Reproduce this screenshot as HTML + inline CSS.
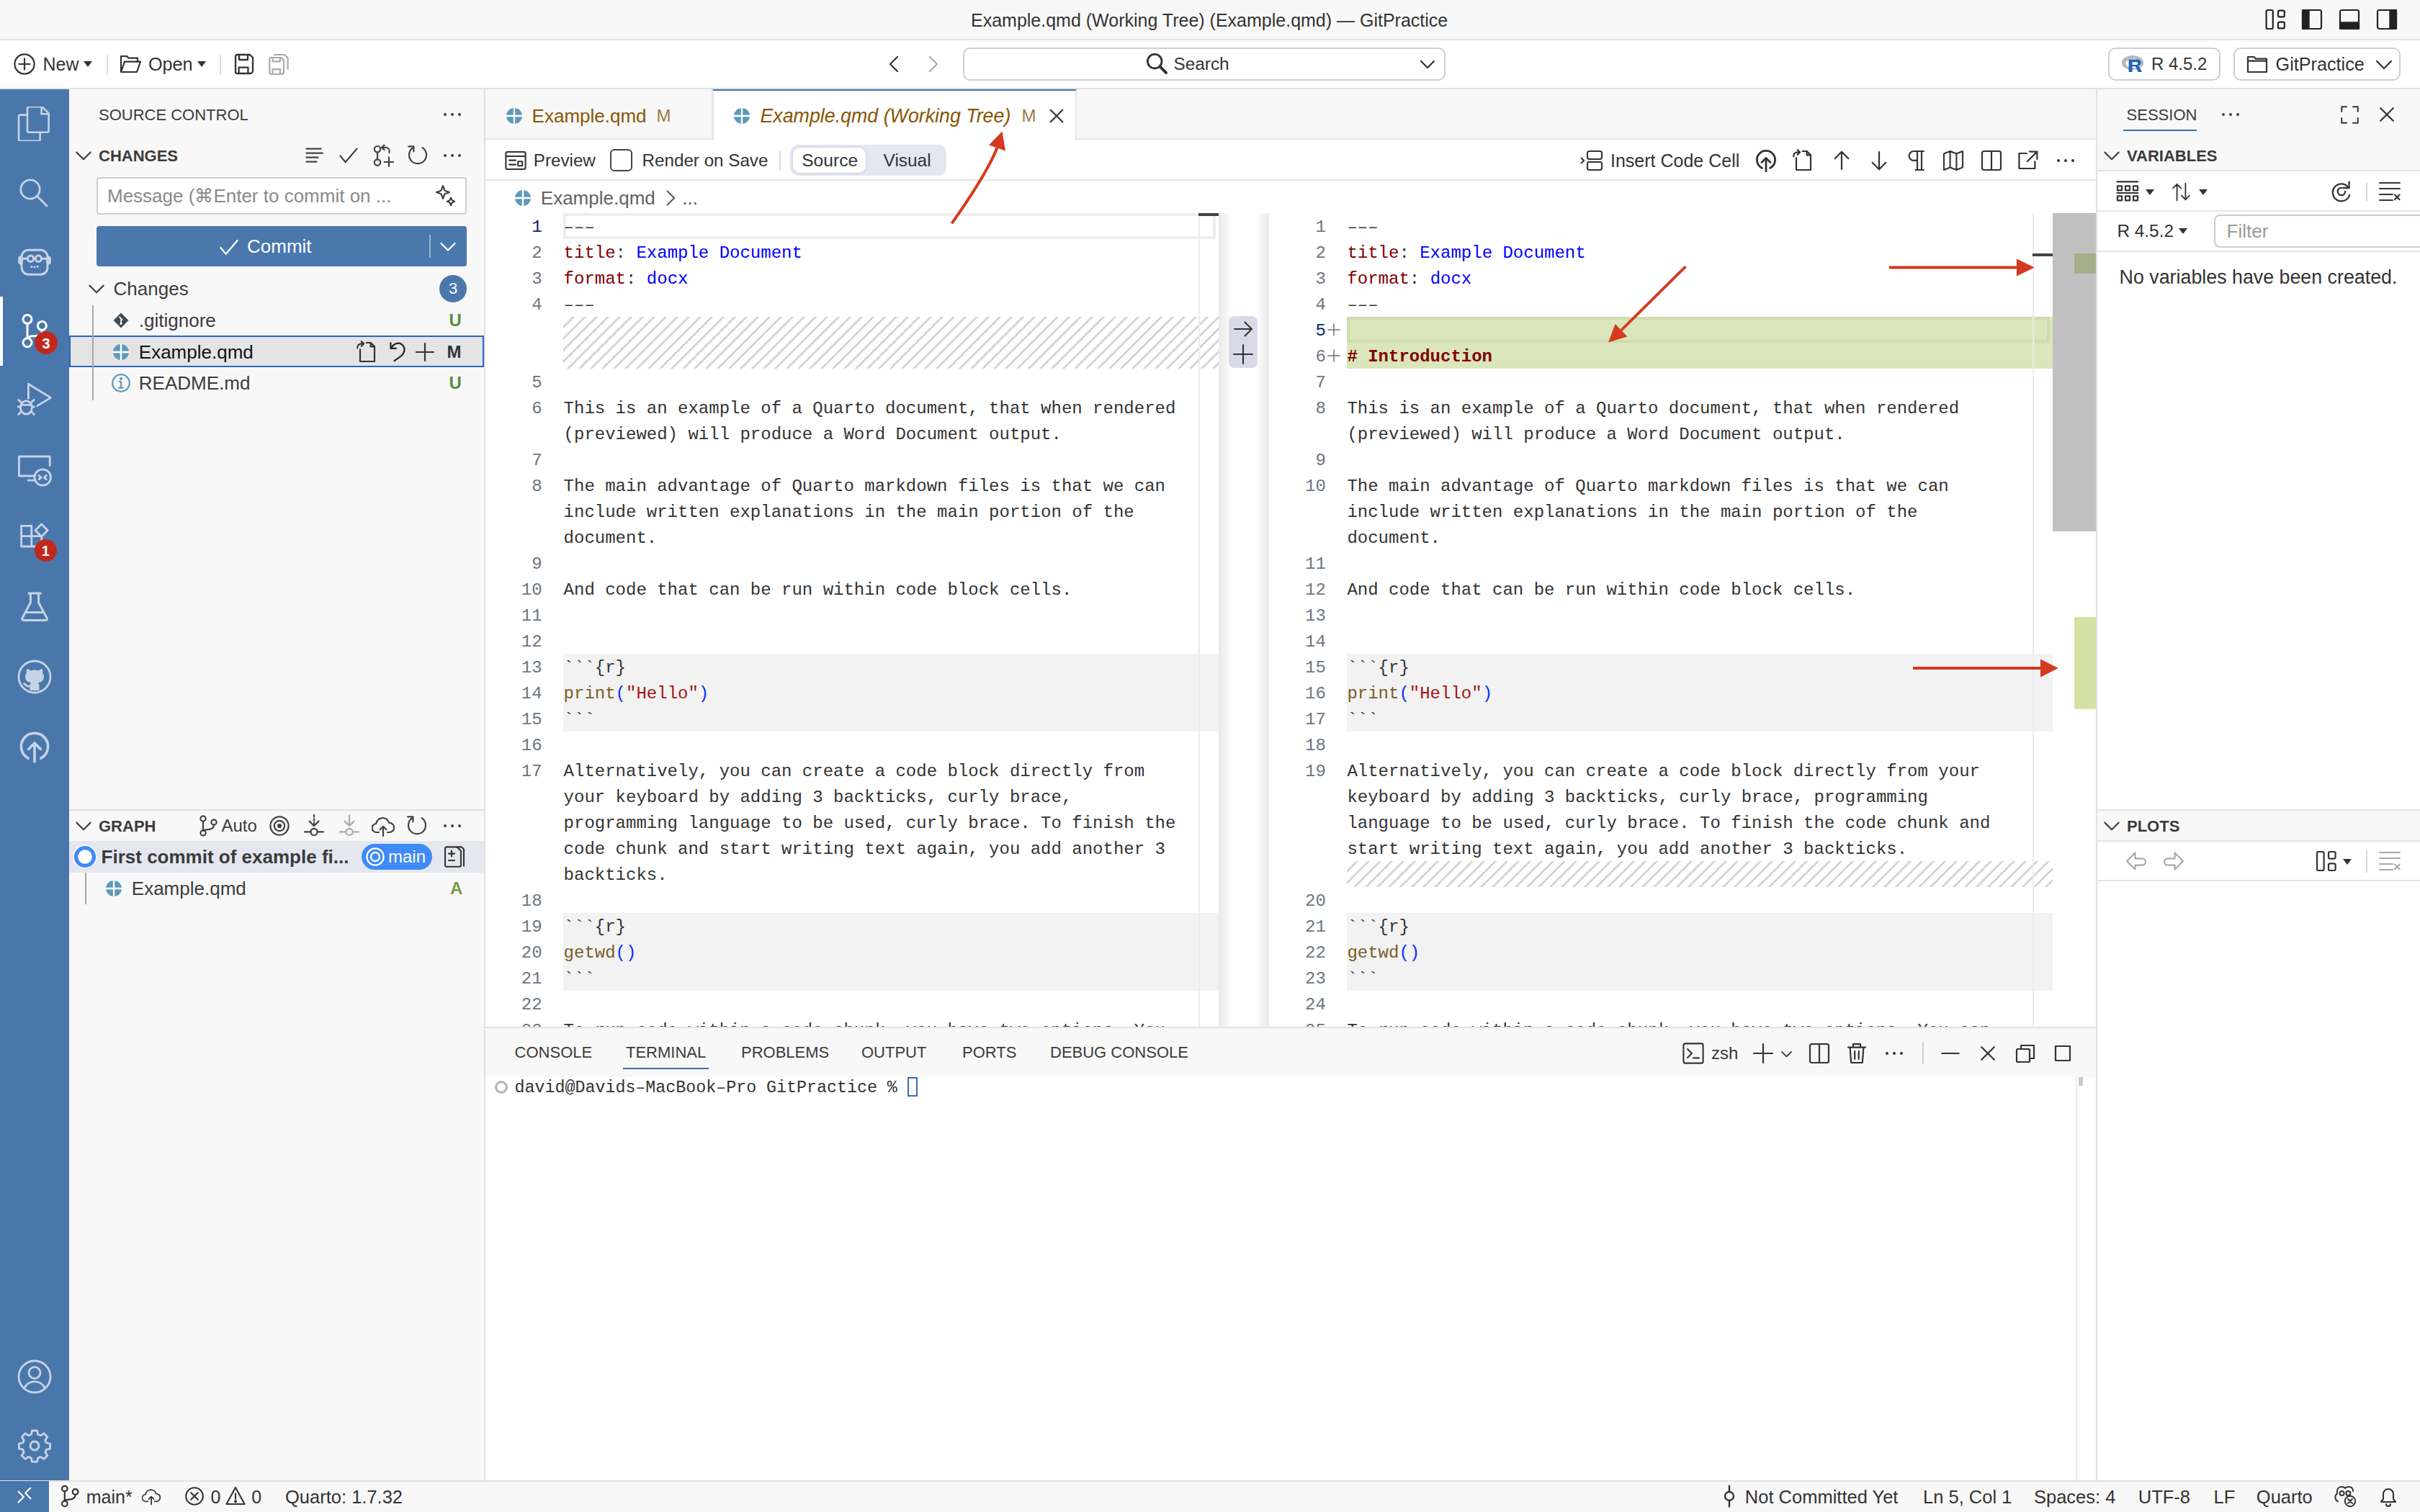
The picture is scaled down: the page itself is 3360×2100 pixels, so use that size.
<!DOCTYPE html><html><head><meta charset="utf-8"><style>
html{zoom:2}
@media (max-width:2000px){html{zoom:1}}
*{box-sizing:border-box}
body{margin:0;width:1680px;height:1050px;overflow:hidden;position:relative;background:#fff;font-family:"Liberation Sans",sans-serif;color:#3b3b3b;-webkit-font-smoothing:antialiased}
.a{position:absolute}
.t{position:absolute;white-space:pre;line-height:0;}
.m{font-family:"Liberation Mono",monospace}
</style></head><body><div class="a " style="left:0px;top:0px;width:1680px;height:28px;background:#f8f8f8;border-bottom:1px solid #e2e2e2"></div>
<div class="t " style="left:674px;top:14px;font-size:12.5px;color:#333">Example.qmd (Working Tree) (Example.qmd) — GitPractice</div>
<div class="a " style="left:0px;top:28px;width:1680px;height:34px;background:#ffffff;border-bottom:1px solid #e2e2e2"></div>
<div class="t " style="left:29.75px;top:44.5px;font-size:12.5px;color:#333">New</div>
<div class="t " style="left:103px;top:44.5px;font-size:12.6px;color:#333">Open</div>
<div class="a " style="left:74px;top:38px;width:1px;height:14px;background:#dcdcdc"></div>
<div class="a " style="left:152.5px;top:38px;width:1px;height:14px;background:#dcdcdc"></div>
<div class="a " style="left:668.5px;top:33px;width:335px;height:23px;border:1px solid #cfcfcf;border-radius:5px;background:#fff"></div>
<div class="t " style="left:814.7px;top:44.5px;font-size:12.2px;color:#333">Search</div>
<div class="a " style="left:1463.5px;top:33px;width:78px;height:23px;border:1px solid #cfcfcf;border-radius:5px;background:#fff"></div>
<div class="t " style="left:1493.5px;top:44.5px;font-size:12px;color:#333">R 4.5.2</div>
<div class="a " style="left:1550.5px;top:33px;width:116px;height:23px;border:1px solid #cfcfcf;border-radius:5px;background:#fff"></div>
<div class="t " style="left:1579.8px;top:44.5px;font-size:12.6px;color:#333">GitPractice</div>
<div class="a " style="left:0px;top:62px;width:48px;height:966px;background:#4a77ab"></div>
<div class="a " style="left:0px;top:206px;width:2px;height:48px;background:#ffffff"></div>
<div class="a " style="left:48px;top:62px;width:289px;height:966px;background:#f8f8f8;border-right:1px solid #e2e2e2"></div>
<div class="t " style="left:68.5px;top:80px;font-size:11px;color:#3b3b3b">SOURCE CONTROL</div>
<div class="t " style="left:68.5px;top:108.7px;font-size:11px;font-weight:bold;color:#3b3b3b">CHANGES</div>
<div class="a " style="left:67px;top:123px;width:257px;height:26px;border:1px solid #cecece;border-radius:2px;background:#fff"></div>
<div class="t " style="left:74.5px;top:136px;font-size:13px;color:#8a8a8a">Message (⌘Enter to commit on ...</div>
<div class="a " style="left:67px;top:157px;width:257px;height:28px;background:#4a78ad;border-radius:2px"></div>
<div class="a " style="left:298px;top:163px;width:1px;height:16px;background:rgba(255,255,255,0.45)"></div>
<div class="t " style="left:171.5px;top:171px;font-size:13px;color:#fff">Commit</div>
<div class="t " style="left:78.8px;top:200.5px;font-size:13px;color:#3b3b3b">Changes</div>
<div class="a " style="left:305px;top:191px;width:19px;height:19px;background:#4a78ad;border-radius:50%"></div>
<div class="t " style="left:314.5px;top:200.5px;font-size:11px;color:#fff;transform:translateX(-50%)">3</div>
<div class="a " style="left:48px;top:233px;width:288px;height:22px;background:#e4e4e4;border:1px solid #2a64c8"></div>
<div class="a " style="left:64px;top:212px;width:1px;height:66px;background:#a8a8a8"></div>
<div class="t " style="left:96.4px;top:222.5px;font-size:13px;color:#3b3b3b">.gitignore</div>
<div class="t " style="left:96.4px;top:244.5px;font-size:13px;color:#111">Example.qmd</div>
<div class="t " style="left:96.4px;top:266px;font-size:13px;color:#3b3b3b">README.md</div>
<div class="t " style="left:311.8px;top:222.5px;font-size:12px;font-weight:bold;color:#588c3c">U</div>
<div class="t " style="left:311.8px;top:266px;font-size:12px;font-weight:bold;color:#588c3c">U</div>
<div class="t " style="left:310.2px;top:244.5px;font-size:12px;font-weight:bold;color:#333">M</div>
<div class="a " style="left:48px;top:562px;width:288px;height:1px;background:#e2e2e2"></div>
<div class="t " style="left:68.5px;top:574px;font-size:11px;font-weight:bold;color:#3b3b3b">GRAPH</div>
<div class="t " style="left:153.75px;top:573.5px;font-size:12px;color:#3b3b3b">Auto</div>
<div class="a " style="left:48px;top:584px;width:288px;height:22px;background:#e5e7f0"></div>
<div class="t " style="left:70.3px;top:595px;font-size:13px;font-weight:bold;color:#3b3b3b">First commit of example fi...</div>
<div class="a " style="left:251px;top:586px;width:49px;height:18px;background:#3f8af7;border-radius:9px"></div>
<div class="t " style="left:269.5px;top:595px;font-size:12px;color:#fff">main</div>
<div class="a " style="left:59px;top:606px;width:1px;height:22px;background:#a8a8a8"></div>
<div class="t " style="left:91.4px;top:617px;font-size:13px;color:#3b3b3b">Example.qmd</div>
<div class="t " style="left:312.5px;top:617px;font-size:12px;font-weight:bold;color:#7a9a4a">A</div>
<div class="a " style="left:0px;top:1028px;width:1680px;height:22px;background:#f8f8f8;border-top:1px solid #e2e2e2"></div>
<div class="a " style="left:0px;top:1028.5px;width:34px;height:21.5px;background:#4a77ab"></div>
<div class="t " style="left:59.9px;top:1039.5px;font-size:12.5px;color:#333">main*</div>
<div class="t " style="left:146.3px;top:1039.5px;font-size:12.5px;color:#333">0</div>
<div class="t " style="left:174.6px;top:1039.5px;font-size:12.5px;color:#333">0</div>
<div class="t " style="left:198px;top:1039.5px;font-size:12.75px;color:#333">Quarto: 1.7.32</div>
<div class="t " style="left:1211.4px;top:1039.5px;font-size:12.75px;color:#333">Not Committed Yet</div>
<div class="t " style="left:1335px;top:1039.5px;font-size:12.75px;color:#333">Ln 5, Col 1</div>
<div class="t " style="left:1412px;top:1039.5px;font-size:12.75px;color:#333">Spaces: 4</div>
<div class="t " style="left:1484.4px;top:1039.5px;font-size:12.75px;color:#333">UTF-8</div>
<div class="t " style="left:1536.8px;top:1039.5px;font-size:12.75px;color:#333">LF</div>
<div class="t " style="left:1566.4px;top:1039.5px;font-size:12.75px;color:#333">Quarto</div>
<div class="a " style="left:337px;top:62px;width:1118px;height:35px;background:#f8f8f8;border-bottom:1px solid #e6e6e6"></div>
<div class="a " style="left:337px;top:62px;width:158px;height:35px;background:#f8f8f8;border-right:1px solid #e6e6e6;border-bottom:1px solid #e6e6e6"></div>
<div class="t " style="left:369.3px;top:80.5px;font-size:13px;color:#895503">Example.qmd</div>
<div class="t " style="left:455.7px;top:80.5px;font-size:12px;color:#a07a40">M</div>
<div class="a " style="left:494.7px;top:62px;width:253px;height:36px;background:#fff;border-top:1px solid #3a6fb0;border-right:1px solid #e6e6e6;border-left:1px solid #e6e6e6"></div>
<div class="t " style="left:527.7px;top:80.5px;font-size:13.4px;font-style:italic;color:#895503">Example.qmd (Working Tree)</div>
<div class="t " style="left:709.3px;top:80.5px;font-size:12px;color:#a07a40">M</div>
<div class="a " style="left:337px;top:97.5px;width:1118px;height:28px;background:#fff;border-bottom:1px solid #e6e6e6"></div>
<div class="t " style="left:370.4px;top:111.5px;font-size:12.1px;color:#333">Preview</div>
<div class="a " style="left:423.7px;top:103.6px;width:15.5px;height:15.5px;border:1px solid #444;border-radius:3px;background:#fff"></div>
<div class="t " style="left:445.8px;top:111.5px;font-size:12.1px;color:#333">Render on Save</div>
<div class="a " style="left:541px;top:104.5px;width:1px;height:14px;background:#dedede"></div>
<div class="a " style="left:548.6px;top:100.7px;width:108.3px;height:21.5px;background:#e4e6f0;border-radius:6px"></div>
<div class="a " style="left:549.7px;top:101.6px;width:52.3px;height:19.6px;background:#fff;border:1px solid #d9dcec;border-radius:6px"></div>
<div class="t " style="left:556.6px;top:111.5px;font-size:12.3px;color:#333">Source</div>
<div class="t " style="left:613.3px;top:111.5px;font-size:12.2px;color:#333">Visual</div>
<div class="t " style="left:1118px;top:111.5px;font-size:12.5px;color:#333">Insert Code Cell</div>
<div class="t " style="left:375.4px;top:137.5px;font-size:13px;color:#616161">Example.qmd</div>
<div class="t " style="left:412.7px;top:137.5px;"></div>
<div class="a " style="left:337px;top:713px;width:1118px;height:315px;background:#fff;border-top:1px solid #e2e2e2"></div>
<div class="a " style="left:337px;top:714px;width:1118px;height:34px;background:#f8f8f8"></div>
<div class="t " style="left:357.3px;top:731px;font-size:11px;color:#3b3b3b">CONSOLE</div>
<div class="t " style="left:434.5px;top:731px;font-size:11px;color:#3b3b3b">TERMINAL</div>
<div class="t " style="left:514.5px;top:731px;font-size:11px;color:#3b3b3b">PROBLEMS</div>
<div class="t " style="left:598px;top:731px;font-size:11px;color:#3b3b3b">OUTPUT</div>
<div class="t " style="left:668px;top:731px;font-size:11px;color:#3b3b3b">PORTS</div>
<div class="t " style="left:729px;top:731px;font-size:11px;color:#3b3b3b">DEBUG CONSOLE</div>
<div class="a " style="left:432.5px;top:741.3px;width:59.5px;height:1px;background:#3a6fb0"></div>
<div class="t " style="left:1188px;top:731.5px;font-size:12px;color:#3b3b3b">zsh</div>
<div class="t m" style="left:357.3px;top:755.6px;font-size:11.65px;color:#333">david@Davids–MacBook–Pro GitPractice % </div>
<div class="a " style="left:630px;top:748.2px;width:7px;height:13.5px;border:1px solid #3a6bb0"></div>
<div class="a " style="left:1441px;top:748px;width:1px;height:280px;background:#ececec"></div>
<div class="a " style="left:1443px;top:748px;width:3px;height:6px;background:#c8c8c8"></div>
<div class="a " style="left:1455px;top:62px;width:225px;height:966px;background:#fff;border-left:1px solid #e2e2e2"></div>
<div class="a " style="left:1456px;top:62px;width:224px;height:57px;background:#f8f8f8;border-bottom:1px solid #e2e2e2"></div>
<div class="t " style="left:1476.3px;top:80px;font-size:11px;color:#3b3b3b">SESSION</div>
<div class="a " style="left:1474px;top:90px;width:51px;height:1.2px;background:#3a6fb0"></div>
<div class="t " style="left:1476.5px;top:108.7px;font-size:11px;font-weight:bold;color:#3b3b3b">VARIABLES</div>
<div class="a " style="left:1456px;top:146px;width:224px;height:1px;background:#e6e6e6"></div>
<div class="t " style="left:1469.7px;top:160.7px;font-size:12.2px;color:#333">R 4.5.2</div>
<div class="a " style="left:1536.8px;top:149px;width:160px;height:23px;border:1px solid #c9ccd3;border-radius:4px;background:#fff"></div>
<div class="t " style="left:1545.8px;top:160.7px;font-size:13px;color:#9a9a9a">Filter</div>
<div class="a " style="left:1456px;top:174px;width:224px;height:1px;background:#e6e6e6"></div>
<div class="t " style="left:1471.3px;top:192.5px;font-size:13.4px;color:#333">No variables have been created.</div>
<div class="a " style="left:1456px;top:562px;width:224px;height:22.5px;background:#f8f8f8;border-top:1px solid #e2e2e2;border-bottom:1px solid #e2e2e2"></div>
<div class="t " style="left:1476.5px;top:574px;font-size:11px;font-weight:bold;color:#3b3b3b">PLOTS</div>
<div class="a " style="left:1456px;top:611px;width:224px;height:1px;background:#e6e6e6"></div>
<div class="a" style="left:337px;top:148px;width:1118px;height:565px;overflow:hidden">
<div class="a" style="left:-337px;top:-148px;width:1680px;height:1050px">
<div class="a " style="left:391px;top:454px;width:455px;height:54px;background:#f2f2f2"></div>
<div class="a " style="left:391px;top:634px;width:455px;height:54px;background:#f2f2f2"></div>
<div class="a " style="left:391px;top:220px;width:455px;height:36px;background-image:linear-gradient(-45deg,#d4d4d4 12.5%,transparent 12.5%,transparent 50%,#d4d4d4 50%,#d4d4d4 62.5%,transparent 62.5%,transparent 100%);background-size:8px 8px"></div>
<div class="a " style="left:391px;top:148px;width:453px;height:18px;border:2px solid #eeeeee"></div>
<div class="a " style="left:935.2px;top:454px;width:489.79999999999995px;height:54px;background:#f2f2f2"></div>
<div class="a " style="left:935.2px;top:634px;width:489.79999999999995px;height:54px;background:#f2f2f2"></div>
<div class="a " style="left:935.2px;top:598px;width:489.79999999999995px;height:18px;background-image:linear-gradient(-45deg,#d4d4d4 12.5%,transparent 12.5%,transparent 50%,#d4d4d4 50%,#d4d4d4 62.5%,transparent 62.5%,transparent 100%);background-size:8px 8px"></div>
<div class="a " style="left:935.2px;top:220px;width:489.79999999999995px;height:36px;background:#dbe6bc"></div>
<div class="a " style="left:935.2px;top:220px;width:487.79999999999995px;height:18px;border:2px solid #cfdbb0"></div>
<div class="t m" style="left:336.3px;width:40px;text-align:right;top:157.9px;font-size:12px;color:#0b216f">1</div>
<div class="t m" style="left:391.3px;top:157.9px;font-size:12px"><span style="color:#333333;">–––</span></div>
<div class="t m" style="left:336.3px;width:40px;text-align:right;top:175.9px;font-size:12px;color:#6e7681">2</div>
<div class="t m" style="left:391.3px;top:175.9px;font-size:12px"><span style="color:#800000;">title</span><span style="color:#333333;">:</span><span style="color:#333333;"> </span><span style="color:#0000ff;">Example Document</span></div>
<div class="t m" style="left:336.3px;width:40px;text-align:right;top:193.9px;font-size:12px;color:#6e7681">3</div>
<div class="t m" style="left:391.3px;top:193.9px;font-size:12px"><span style="color:#800000;">format</span><span style="color:#333333;">:</span><span style="color:#333333;"> </span><span style="color:#0000ff;">docx</span></div>
<div class="t m" style="left:336.3px;width:40px;text-align:right;top:211.9px;font-size:12px;color:#6e7681">4</div>
<div class="t m" style="left:391.3px;top:211.9px;font-size:12px"><span style="color:#333333;">–––</span></div>
<div class="t m" style="left:336.3px;width:40px;text-align:right;top:265.9px;font-size:12px;color:#6e7681">5</div>
<div class="t m" style="left:336.3px;width:40px;text-align:right;top:283.9px;font-size:12px;color:#6e7681">6</div>
<div class="t m" style="left:391.3px;top:283.9px;font-size:12px"><span style="color:#333333;">This is an example of a Quarto document, that when rendered</span></div>
<div class="t m" style="left:391.3px;top:301.9px;font-size:12px"><span style="color:#333333;">(previewed) will produce a Word Document output.</span></div>
<div class="t m" style="left:336.3px;width:40px;text-align:right;top:319.9px;font-size:12px;color:#6e7681">7</div>
<div class="t m" style="left:336.3px;width:40px;text-align:right;top:337.9px;font-size:12px;color:#6e7681">8</div>
<div class="t m" style="left:391.3px;top:337.9px;font-size:12px"><span style="color:#333333;">The main advantage of Quarto markdown files is that we can</span></div>
<div class="t m" style="left:391.3px;top:355.9px;font-size:12px"><span style="color:#333333;">include written explanations in the main portion of the</span></div>
<div class="t m" style="left:391.3px;top:373.9px;font-size:12px"><span style="color:#333333;">document.</span></div>
<div class="t m" style="left:336.3px;width:40px;text-align:right;top:391.9px;font-size:12px;color:#6e7681">9</div>
<div class="t m" style="left:336.3px;width:40px;text-align:right;top:409.9px;font-size:12px;color:#6e7681">10</div>
<div class="t m" style="left:391.3px;top:409.9px;font-size:12px"><span style="color:#333333;">And code that can be run within code block cells.</span></div>
<div class="t m" style="left:336.3px;width:40px;text-align:right;top:427.9px;font-size:12px;color:#6e7681">11</div>
<div class="t m" style="left:336.3px;width:40px;text-align:right;top:445.9px;font-size:12px;color:#6e7681">12</div>
<div class="t m" style="left:336.3px;width:40px;text-align:right;top:463.9px;font-size:12px;color:#6e7681">13</div>
<div class="t m" style="left:391.3px;top:463.9px;font-size:12px"><span style="color:#333333;">```{r}</span></div>
<div class="t m" style="left:336.3px;width:40px;text-align:right;top:481.9px;font-size:12px;color:#6e7681">14</div>
<div class="t m" style="left:391.3px;top:481.9px;font-size:12px"><span style="color:#795e26;">print</span><span style="color:#0431fa;">(</span><span style="color:#a31515;">&quot;Hello&quot;</span><span style="color:#0431fa;">)</span></div>
<div class="t m" style="left:336.3px;width:40px;text-align:right;top:499.9px;font-size:12px;color:#6e7681">15</div>
<div class="t m" style="left:391.3px;top:499.9px;font-size:12px"><span style="color:#333333;">```</span></div>
<div class="t m" style="left:336.3px;width:40px;text-align:right;top:517.9px;font-size:12px;color:#6e7681">16</div>
<div class="t m" style="left:336.3px;width:40px;text-align:right;top:535.9px;font-size:12px;color:#6e7681">17</div>
<div class="t m" style="left:391.3px;top:535.9px;font-size:12px"><span style="color:#333333;">Alternatively, you can create a code block directly from</span></div>
<div class="t m" style="left:391.3px;top:553.9px;font-size:12px"><span style="color:#333333;">your keyboard by adding 3 backticks, curly brace,</span></div>
<div class="t m" style="left:391.3px;top:571.9px;font-size:12px"><span style="color:#333333;">programming language to be used, curly brace. To finish the</span></div>
<div class="t m" style="left:391.3px;top:589.9px;font-size:12px"><span style="color:#333333;">code chunk and start writing text again, you add another 3</span></div>
<div class="t m" style="left:391.3px;top:607.9px;font-size:12px"><span style="color:#333333;">backticks.</span></div>
<div class="t m" style="left:336.3px;width:40px;text-align:right;top:625.9px;font-size:12px;color:#6e7681">18</div>
<div class="t m" style="left:336.3px;width:40px;text-align:right;top:643.9px;font-size:12px;color:#6e7681">19</div>
<div class="t m" style="left:391.3px;top:643.9px;font-size:12px"><span style="color:#333333;">```{r}</span></div>
<div class="t m" style="left:336.3px;width:40px;text-align:right;top:661.9px;font-size:12px;color:#6e7681">20</div>
<div class="t m" style="left:391.3px;top:661.9px;font-size:12px"><span style="color:#795e26;">getwd</span><span style="color:#0431fa;">()</span></div>
<div class="t m" style="left:336.3px;width:40px;text-align:right;top:679.9px;font-size:12px;color:#6e7681">21</div>
<div class="t m" style="left:391.3px;top:679.9px;font-size:12px"><span style="color:#333333;">```</span></div>
<div class="t m" style="left:336.3px;width:40px;text-align:right;top:697.9px;font-size:12px;color:#6e7681">22</div>
<div class="t m" style="left:336.3px;width:40px;text-align:right;top:715.9px;font-size:12px;color:#6e7681">23</div>
<div class="t m" style="left:391.3px;top:715.9px;font-size:12px"><span style="color:#333333;">To run code within a code chunk, you have two options. You</span></div>
<div class="t m" style="left:880.4px;width:40px;text-align:right;top:157.9px;font-size:12px;color:#6e7681">1</div>
<div class="t m" style="left:935.2px;top:157.9px;font-size:12px"><span style="color:#333333;">–––</span></div>
<div class="t m" style="left:880.4px;width:40px;text-align:right;top:175.9px;font-size:12px;color:#6e7681">2</div>
<div class="t m" style="left:935.2px;top:175.9px;font-size:12px"><span style="color:#800000;">title</span><span style="color:#333333;">:</span><span style="color:#333333;"> </span><span style="color:#0000ff;">Example Document</span></div>
<div class="t m" style="left:880.4px;width:40px;text-align:right;top:193.9px;font-size:12px;color:#6e7681">3</div>
<div class="t m" style="left:935.2px;top:193.9px;font-size:12px"><span style="color:#800000;">format</span><span style="color:#333333;">:</span><span style="color:#333333;"> </span><span style="color:#0000ff;">docx</span></div>
<div class="t m" style="left:880.4px;width:40px;text-align:right;top:211.9px;font-size:12px;color:#6e7681">4</div>
<div class="t m" style="left:935.2px;top:211.9px;font-size:12px"><span style="color:#333333;">–––</span></div>
<div class="t m" style="left:880.4px;width:40px;text-align:right;top:229.9px;font-size:12px;color:#0b216f">5</div>
<div class="t m" style="left:880.4px;width:40px;text-align:right;top:247.9px;font-size:12px;color:#6e7681">6</div>
<div class="t m" style="left:935.2px;top:247.9px;font-size:12px"><span style="color:#800000;font-weight:bold;"># Introduction</span></div>
<div class="t m" style="left:880.4px;width:40px;text-align:right;top:265.9px;font-size:12px;color:#6e7681">7</div>
<div class="t m" style="left:880.4px;width:40px;text-align:right;top:283.9px;font-size:12px;color:#6e7681">8</div>
<div class="t m" style="left:935.2px;top:283.9px;font-size:12px"><span style="color:#333333;">This is an example of a Quarto document, that when rendered</span></div>
<div class="t m" style="left:935.2px;top:301.9px;font-size:12px"><span style="color:#333333;">(previewed) will produce a Word Document output.</span></div>
<div class="t m" style="left:880.4px;width:40px;text-align:right;top:319.9px;font-size:12px;color:#6e7681">9</div>
<div class="t m" style="left:880.4px;width:40px;text-align:right;top:337.9px;font-size:12px;color:#6e7681">10</div>
<div class="t m" style="left:935.2px;top:337.9px;font-size:12px"><span style="color:#333333;">The main advantage of Quarto markdown files is that we can</span></div>
<div class="t m" style="left:935.2px;top:355.9px;font-size:12px"><span style="color:#333333;">include written explanations in the main portion of the</span></div>
<div class="t m" style="left:935.2px;top:373.9px;font-size:12px"><span style="color:#333333;">document.</span></div>
<div class="t m" style="left:880.4px;width:40px;text-align:right;top:391.9px;font-size:12px;color:#6e7681">11</div>
<div class="t m" style="left:880.4px;width:40px;text-align:right;top:409.9px;font-size:12px;color:#6e7681">12</div>
<div class="t m" style="left:935.2px;top:409.9px;font-size:12px"><span style="color:#333333;">And code that can be run within code block cells.</span></div>
<div class="t m" style="left:880.4px;width:40px;text-align:right;top:427.9px;font-size:12px;color:#6e7681">13</div>
<div class="t m" style="left:880.4px;width:40px;text-align:right;top:445.9px;font-size:12px;color:#6e7681">14</div>
<div class="t m" style="left:880.4px;width:40px;text-align:right;top:463.9px;font-size:12px;color:#6e7681">15</div>
<div class="t m" style="left:935.2px;top:463.9px;font-size:12px"><span style="color:#333333;">```{r}</span></div>
<div class="t m" style="left:880.4px;width:40px;text-align:right;top:481.9px;font-size:12px;color:#6e7681">16</div>
<div class="t m" style="left:935.2px;top:481.9px;font-size:12px"><span style="color:#795e26;">print</span><span style="color:#0431fa;">(</span><span style="color:#a31515;">&quot;Hello&quot;</span><span style="color:#0431fa;">)</span></div>
<div class="t m" style="left:880.4px;width:40px;text-align:right;top:499.9px;font-size:12px;color:#6e7681">17</div>
<div class="t m" style="left:935.2px;top:499.9px;font-size:12px"><span style="color:#333333;">```</span></div>
<div class="t m" style="left:880.4px;width:40px;text-align:right;top:517.9px;font-size:12px;color:#6e7681">18</div>
<div class="t m" style="left:880.4px;width:40px;text-align:right;top:535.9px;font-size:12px;color:#6e7681">19</div>
<div class="t m" style="left:935.2px;top:535.9px;font-size:12px"><span style="color:#333333;">Alternatively, you can create a code block directly from your</span></div>
<div class="t m" style="left:935.2px;top:553.9px;font-size:12px"><span style="color:#333333;">keyboard by adding 3 backticks, curly brace, programming</span></div>
<div class="t m" style="left:935.2px;top:571.9px;font-size:12px"><span style="color:#333333;">language to be used, curly brace. To finish the code chunk and</span></div>
<div class="t m" style="left:935.2px;top:589.9px;font-size:12px"><span style="color:#333333;">start writing text again, you add another 3 backticks.</span></div>
<div class="t m" style="left:880.4px;width:40px;text-align:right;top:625.9px;font-size:12px;color:#6e7681">20</div>
<div class="t m" style="left:880.4px;width:40px;text-align:right;top:643.9px;font-size:12px;color:#6e7681">21</div>
<div class="t m" style="left:935.2px;top:643.9px;font-size:12px"><span style="color:#333333;">```{r}</span></div>
<div class="t m" style="left:880.4px;width:40px;text-align:right;top:661.9px;font-size:12px;color:#6e7681">22</div>
<div class="t m" style="left:935.2px;top:661.9px;font-size:12px"><span style="color:#795e26;">getwd</span><span style="color:#0431fa;">()</span></div>
<div class="t m" style="left:880.4px;width:40px;text-align:right;top:679.9px;font-size:12px;color:#6e7681">23</div>
<div class="t m" style="left:935.2px;top:679.9px;font-size:12px"><span style="color:#333333;">```</span></div>
<div class="t m" style="left:880.4px;width:40px;text-align:right;top:697.9px;font-size:12px;color:#6e7681">24</div>
<div class="t m" style="left:880.4px;width:40px;text-align:right;top:715.9px;font-size:12px;color:#6e7681">25</div>
<div class="t m" style="left:935.2px;top:715.9px;font-size:12px"><span style="color:#333333;">To run code within a code chunk, you have two options. You can</span></div>
<svg class="a" style="left:921.5px;top:224.5px" width="9" height="9" viewBox="0 0 9 9"><path d="M4.5 0.2v8.6M0.2 4.5h8.6" stroke="#6f6f6f" stroke-width="0.75"/></svg>
<svg class="a" style="left:921.5px;top:242.5px" width="9" height="9" viewBox="0 0 9 9"><path d="M4.5 0.2v8.6M0.2 4.5h8.6" stroke="#6f6f6f" stroke-width="0.75"/></svg>
<div class="a " style="left:832px;top:148px;width:1px;height:565px;background:#ececec"></div>
<div class="a " style="left:832px;top:148px;width:14px;height:2px;background:#444"></div>
<div class="a " style="left:846px;top:148px;width:9px;height:565px;background:linear-gradient(to right,rgba(0,0,0,0.09),rgba(0,0,0,0))"></div>
<div class="a " style="left:872px;top:148px;width:9px;height:565px;background:linear-gradient(to left,rgba(0,0,0,0.09),rgba(0,0,0,0))"></div>
<div class="a " style="left:853px;top:219.6px;width:20px;height:36px;background:#d9d9e8;border-radius:4px"></div>
<div class="a " style="left:1411px;top:148px;width:1px;height:565px;background:#ececec"></div>
<div class="a " style="left:1411px;top:176px;width:14px;height:2px;background:#444"></div>
<div class="a " style="left:1425px;top:148px;width:30px;height:220.8px;background:#c1c1c1"></div>
<div class="a " style="left:1440px;top:176px;width:15px;height:14px;background:#a5b08a"></div>
<div class="a " style="left:1440px;top:428.3px;width:15px;height:64px;background:#d3e2a4"></div>
</div></div>
<svg class="a" style="left:11.5px;top:74.0px;" width="24" height="24" viewBox="0 0 24 24" fill="none" stroke="#c5d3e6" stroke-width="1.3" stroke-linecap="round" stroke-linejoin="round"><path d="M7.5 5.8h-5a1 1 0 0 0-1 1v16.1a1 1 0 0 0 1 1h12.8a1 1 0 0 0 1-1v-5"/><path d="M7.5 1.1a1 1 0 0 1 1-1h9.2l4.6 4.6v12.2a1 1 0 0 1-1 1h-12.8a1 1 0 0 1-1-1z"/><path d="M17.3 0.3v4.8h4.8" stroke-linejoin="miter"/></svg>
<svg class="a" style="left:11.5px;top:122.0px;" width="24" height="24" viewBox="0 0 24 24" fill="none" stroke="#c5d3e6" stroke-width="1.4" stroke-linecap="round" stroke-linejoin="round"><circle cx="9.5" cy="9.5" r="6.6"/><path d="M14.3 14.3l6.7 6.7"/></svg>
<svg class="a" style="left:12.0px;top:170.0px;" width="24" height="24" viewBox="0 0 24 24" fill="none" stroke="#c5d3e6" stroke-width="1.5" stroke-linecap="round" stroke-linejoin="round"><rect x="3" y="3.6" width="18" height="17" rx="4.8"/><circle cx="9.3" cy="9.6" r="2.1"/><circle cx="14.7" cy="9.6" r="2.1"/><path d="M11.4 9.6h1.2M3 9.6h4.2M21 9.6h-4.2"/><rect x="1.3" y="8.6" width="1.9" height="4.4" rx="0.95" fill="#c5d3e6"/><rect x="20.8" y="8.6" width="1.9" height="4.4" rx="0.95" fill="#c5d3e6"/><circle cx="9.9" cy="15.2" r="0.75" fill="#c5d3e6" stroke="none"/><circle cx="12" cy="15.4" r="0.75" fill="#c5d3e6" stroke="none"/><circle cx="14.1" cy="15.1" r="0.75" fill="#c5d3e6" stroke="none"/></svg>
<svg class="a" style="left:12.0px;top:218.0px;" width="24" height="24" viewBox="0 0 24 24" fill="none" stroke="#ffffff" stroke-width="1.5" stroke-linecap="round" stroke-linejoin="round"><circle cx="7" cy="3.7" r="3"/><circle cx="7" cy="19.9" r="3"/><circle cx="17.2" cy="8.2" r="3"/><path d="M7 6.7v10.2"/><path d="M17.2 11.2c0 3-2.5 4.2-5 4.2h-1.5c-2 0-3.7 1.2-3.7 1.5"/></svg>
<svg class="a" style="left:12.0px;top:266.0px;" width="24" height="24" viewBox="0 0 24 24" fill="none" stroke="#c5d3e6" stroke-width="1.4" stroke-linecap="round" stroke-linejoin="round"><path d="M7.7 0.6l15.5 9.6-9.3 5.6"/><path d="M7.7 0.6v10"/><ellipse cx="6.2" cy="17" rx="4" ry="4.6"/><path d="M2.2 16.5h-1.6M10.2 16.5h1.6M2.6 13.3l-1.8-1.6M9.8 13.3l1.8-1.6M2.6 20l-1.8 1.8M9.8 20l1.8 1.8M2.8 15.2h6.8"/></svg>
<svg class="a" style="left:12.0px;top:314.0px;" width="24" height="24" viewBox="0 0 24 24" fill="none" stroke="#c5d3e6" stroke-width="1.4" stroke-linecap="round" stroke-linejoin="round"><path d="M11.2 16.5h-10v-13.5h21.4v6.3"/><path d="M7.5 19.6h4"/><circle cx="17.6" cy="17.5" r="5.6"/><path d="M15 16.2l1.6 1.4-1.6 1.3M20.2 16.2l-1.6 1.4 1.6 1.3"/></svg>
<svg class="a" style="left:12.0px;top:362.0px;" width="24" height="24" viewBox="0 0 24 24" fill="none" stroke="#c5d3e6" stroke-width="1.4" stroke-linecap="round" stroke-linejoin="round"><path d="M2.8 3.2h7.1v14.3h-7.1z M2.8 10.3h7.1M9.9 10.3h7v7.2h-7"/><path d="M12.5 6.3l4.3-4.3 4.3 4.3-4.3 4.3z"/></svg>
<svg class="a" style="left:12.0px;top:410.0px;" width="24" height="24" viewBox="0 0 24 24" fill="none" stroke="#c5d3e6" stroke-width="1.5" stroke-linecap="round" stroke-linejoin="round"><path d="M9.2 2v6.5l-5.8 10.8a1 1 0 0 0 0.9 1.4h15.4a1 1 0 0 0 0.9-1.4l-5.8-10.8v-6.5"/><path d="M7.8 2h8.4M5.8 15.2h12.4"/></svg>
<svg class="a" style="left:12.0px;top:458.0px;" width="24" height="24" viewBox="0 0 24 24" fill="none" stroke="#c5d3e6" stroke-width="1.4" stroke-linecap="round" stroke-linejoin="round"><circle cx="12" cy="12" r="11"/><path fill="#c5d3e6" stroke="none" d="M8.8 21.5v-3.6c0-0.8 0.3-1.4 0.7-1.8-2.3-0.3-4-1.4-4-4.2 0-1 0.4-1.9 1-2.5-0.1-0.3-0.4-1.4 0.1-2.7 0 0 0.8-0.3 2.7 1a9 9 0 0 1 5.4 0c1.9-1.3 2.7-1 2.7-1 0.5 1.3 0.2 2.4 0.1 2.7 0.6 0.7 1 1.5 1 2.5 0 2.8-1.7 3.9-4 4.2 0.4 0.4 0.7 1 0.7 1.8v3.6z"/><path d="M8.8 18.6c-2.5 0.5-2.8-1.4-4-1.8"/></svg>
<svg class="a" style="left:12.0px;top:506.0px;" width="24" height="24" viewBox="0 0 24 24" fill="none" stroke="#c5d3e6" stroke-width="1.8" stroke-linecap="round" stroke-linejoin="round"><path d="M7.6 20.6a9.3 9.3 0 1 1 8.8 0"/><path d="M12 23v-12.6M7.8 14.2l4.2-4.2 4.2 4.2"/></svg>
<svg class="a" style="left:12.0px;top:944.0px;" width="24" height="24" viewBox="0 0 24 24" fill="none" stroke="#c5d3e6" stroke-width="1.4" stroke-linecap="round" stroke-linejoin="round"><circle cx="12" cy="12" r="11"/><circle cx="12" cy="9.3" r="4"/><path d="M4.8 20.2c1.2-3 4-4.8 7.2-4.8s6 1.8 7.2 4.8"/></svg>
<svg class="a" style="left:12.0px;top:992.0px;" width="24" height="24" viewBox="0 0 24 24" fill="none" stroke="#c5d3e6" stroke-width="1.4" stroke-linecap="round" stroke-linejoin="round"><path d="M10.2 1.5h3.6l0.5 2.6 1.9 0.8 2.2-1.5 2.5 2.5-1.5 2.2 0.8 1.9 2.6 0.5v3.6l-2.6 0.5-0.8 1.9 1.5 2.2-2.5 2.5-2.2-1.5-1.9 0.8-0.5 2.6h-3.6l-0.5-2.6-1.9-0.8-2.2 1.5-2.5-2.5 1.5-2.2-0.8-1.9-2.6-0.5v-3.6l2.6-0.5 0.8-1.9-1.5-2.2 2.5-2.5 2.2 1.5 1.9-0.8z"/><circle cx="12" cy="12" r="3"/></svg>
<div class="a " style="left:24px;top:230px;width:16px;height:16px;background:#c0281d;border-radius:50%"></div>
<div class="t " style="left:32px;top:238.3px;font-size:10px;font-weight:bold;color:#fff;transform:translateX(-50%)">3</div>
<div class="a " style="left:23.85px;top:374.25px;width:15.5px;height:15.5px;background:#c0281d;border-radius:50%"></div>
<div class="t " style="left:31.6px;top:382.3px;font-size:10px;font-weight:bold;color:#fff;transform:translateX(-50%)">1</div>
<svg class="a" style="left:1571.5px;top:5.5px;" width="16" height="16" viewBox="0 0 16 16" fill="none" stroke="#222" stroke-width="1.1" stroke-linecap="round" stroke-linejoin="round"><rect x="1.8" y="1.5" width="4.6" height="13" rx="1"/><rect x="10" y="1.8" width="4.4" height="4.4" rx="1"/><rect x="10" y="9.8" width="4.4" height="4.4" rx="1"/></svg>
<svg class="a" style="left:1597.0px;top:5.5px;" width="16" height="16" viewBox="0 0 16 16" fill="none" stroke="#222" stroke-width="1.1" stroke-linecap="round" stroke-linejoin="round"><rect x="1.5" y="1.5" width="13" height="13" rx="1.2"/><rect x="1.5" y="1.5" width="4.3" height="13" fill="#222"/></svg>
<svg class="a" style="left:1623.0px;top:5.5px;" width="16" height="16" viewBox="0 0 16 16" fill="none" stroke="#222" stroke-width="1.1" stroke-linecap="round" stroke-linejoin="round"><rect x="1.5" y="1.5" width="13" height="13" rx="1.2"/><rect x="1.5" y="10.2" width="13" height="4.3" fill="#222"/></svg>
<svg class="a" style="left:1649.0px;top:5.5px;" width="16" height="16" viewBox="0 0 16 16" fill="none" stroke="#222" stroke-width="1.1" stroke-linecap="round" stroke-linejoin="round"><rect x="1.5" y="1.5" width="13" height="13" rx="1.2"/><rect x="10.2" y="1.5" width="4.3" height="13" fill="#222"/></svg>
<svg class="a" style="left:9.0px;top:36.5px;" width="16" height="16" viewBox="0 0 16 16" fill="none" stroke="#333" stroke-width="1.1" stroke-linecap="round" stroke-linejoin="round"><circle cx="8" cy="8" r="6.8"/><path d="M8 4.2v7.6M4.2 8h7.6"/></svg>
<svg class="a" style="left:58.0px;top:42.7px" width="6" height="4" viewBox="0 0 6 4"><path d="M0 0h6l-3 4z" fill="#333"/></svg>
<svg class="a" style="left:137.0px;top:42.7px" width="6" height="4" viewBox="0 0 6 4"><path d="M0 0h6l-3 4z" fill="#333"/></svg>
<svg class="a" style="left:82.5px;top:36.5px;" width="16" height="16" viewBox="0 0 16 16" fill="none" stroke="#333" stroke-width="1.1" stroke-linecap="round" stroke-linejoin="round"><path d="M1.5 13.5v-11h4l1.2 1.3h6.3v2.5"/><path d="M1.5 13.5l2.5-7.2h11l-2.5 7.2z"/></svg>
<svg class="a" style="left:161.0px;top:36.5px;" width="16" height="16" viewBox="0 0 16 16" fill="none" stroke="#333" stroke-width="1.15" stroke-linecap="round" stroke-linejoin="round"><path d="M2.5 2.5a1 1 0 0 1 1-1h9l2 2v9a2 2 0 0 1-2 2h-9a1 1 0 0 1-1-1z"/><path d="M5 1.5v3.5h6v-3.5"/><path d="M4.8 14.5v-4.2h6.4v4.2"/></svg>
<svg class="a" style="left:186.0px;top:36.5px;" width="16" height="16" viewBox="0 0 16 16" fill="none" stroke="#aaa" stroke-width="1.1" stroke-linecap="round" stroke-linejoin="round"><path d="M1.2 4.5a1 1 0 0 1 1-1h7l1.8 1.8v8.2a1.5 1.5 0 0 1-1.5 1.5h-7.3a1 1 0 0 1-1-1z"/><path d="M3.4 3.5v2.7h5v-2.7M3.3 14.9v-3.3h5.2v3.3"/><path d="M4.5 1.5h7l2.3 2.3v7.5"/></svg>
<svg class="a" style="left:612.8px;top:36.5px;" width="16" height="16" viewBox="0 0 16 16" fill="none" stroke="#333" stroke-width="1.1" stroke-linecap="round" stroke-linejoin="round"><path d="M10 3l-5 5 5 5"/></svg>
<svg class="a" style="left:639.6px;top:36.5px;" width="16" height="16" viewBox="0 0 16 16" fill="none" stroke="#aaa" stroke-width="1.1" stroke-linecap="round" stroke-linejoin="round"><path d="M6 3l5 5-5 5"/></svg>
<svg class="a" style="left:795.0px;top:36.2px;" width="16" height="16" viewBox="0 0 16 16" fill="none" stroke="#333" stroke-width="1.4" stroke-linecap="round" stroke-linejoin="round"><circle cx="6.6" cy="6.6" r="4.9"/><path d="M10.2 10.2l4.3 4.3" stroke-width="2"/></svg>
<svg class="a" style="left:982.8px;top:36.5px;" width="16" height="16" viewBox="0 0 16 16" fill="none" stroke="#333" stroke-width="1.1" stroke-linecap="round" stroke-linejoin="round"><path d="M3.5 6l4.5 4.5 4.5-4.5"/></svg>
<svg class="a" style="left:1472.5px;top:36.5px" width="17" height="16" viewBox="0 0 17 16"><ellipse cx="8" cy="7" rx="7.6" ry="5" fill="#b8b8bc"/><ellipse cx="8.6" cy="7.6" rx="5.4" ry="3.3" fill="#fff"/><path d="M5.3 4.8h6c1.6 0 2.6 0.9 2.6 2.3 0 1.1-0.6 1.8-1.6 2.1l2.2 4.3h-2.6l-1.9-3.9h-2.2v3.9h-2.5z M7.8 6.6v1.9h2.9c0.7 0 1-0.4 1-0.95s-0.3-0.95-1-0.95z" fill="#2165b6"/></svg>
<svg class="a" style="left:1559.0px;top:36.5px;" width="16" height="16" viewBox="0 0 16 16" fill="none" stroke="#333" stroke-width="1.1" stroke-linecap="round" stroke-linejoin="round"><path d="M1.5 3h4.2l1.3 1.3h7.5v9.2h-13z M1.5 5.8h13"/></svg>
<svg class="a" style="left:1647.0px;top:36.5px;" width="16" height="16" viewBox="0 0 16 16" fill="none" stroke="#333" stroke-width="1.1" stroke-linecap="round" stroke-linejoin="round"><path d="M3 6l5 5 5-5"/></svg>
<svg class="a" style="left:306px;top:71.5px" width="16" height="16" viewBox="0 0 16 16" fill="#424242"><circle cx="3" cy="8" r="1"/><circle cx="8" cy="8" r="1"/><circle cx="13" cy="8" r="1"/></svg>
<svg class="a" style="left:50.0px;top:100.2px;" width="16" height="16" viewBox="0 0 16 16" fill="none" stroke="#424242" stroke-width="1.1" stroke-linecap="round" stroke-linejoin="round"><path d="M3.2 5.8l4.8 4.8 4.8-4.8"/></svg>
<svg class="a" style="left:210.0px;top:100.0px;" width="16" height="16" viewBox="0 0 16 16" fill="none" stroke="#424242" stroke-width="1.1" stroke-linecap="round" stroke-linejoin="round"><path d="M2.3 3.3h11M2.3 6.3h12M2.3 9.3h8.9M2.3 12.3h7.9" stroke-linecap="butt"/></svg>
<svg class="a" style="left:234.0px;top:100.0px;" width="16" height="16" viewBox="0 0 16 16" fill="none" stroke="#424242" stroke-width="1.1" stroke-linecap="round" stroke-linejoin="round"><path d="M2.2 8.2l3.6 4.4 8-9.4"/></svg>
<svg class="a" style="left:257.5px;top:100.0px;" width="16" height="16" viewBox="0 0 16 16" fill="none" stroke="#424242" stroke-width="1.1" stroke-linecap="round" stroke-linejoin="round"><circle cx="4.5" cy="3.6" r="2.1"/><circle cx="4.5" cy="12.8" r="2.1"/><path d="M4.5 5.7v5M12.8 6v-1.2a2.4 2.4 0 0 0-2.4-2.4h-2.6M9.3 0.8l-1.9 1.6 1.9 1.7M12.5 9.2v6.4M9.3 12.5h6.4"/></svg>
<svg class="a" style="left:282.0px;top:100.0px;" width="16" height="16" viewBox="0 0 16 16" fill="none" stroke="#424242" stroke-width="1.1" stroke-linecap="round" stroke-linejoin="round"><path d="M11.3 2.6a6 6 0 1 1-6.6 0"/><path d="M1.6 1.7h3.6v3.5"/></svg>
<svg class="a" style="left:306px;top:100px" width="16" height="16" viewBox="0 0 16 16" fill="#424242"><circle cx="3" cy="8" r="1"/><circle cx="8" cy="8" r="1"/><circle cx="13" cy="8" r="1"/></svg>
<svg class="a" style="left:301.0px;top:127.5px;" width="16" height="16" viewBox="0 0 16 16" fill="none" stroke="#333" stroke-width="1.0" stroke-linecap="round" stroke-linejoin="round"><path d="M6.5 1.5l1.2 3.3 3.3 1.2-3.3 1.2-1.2 3.3-1.2-3.3-3.3-1.2 3.3-1.2z"/><path d="M12 9.8l0.8 1.8 1.8 0.8-1.8 0.8-0.8 1.8-0.8-1.8-1.8-0.8 1.8-0.8z"/></svg>
<svg class="a" style="left:151.0px;top:163.5px;" width="16" height="16" viewBox="0 0 16 16" fill="none" stroke="#ffffff" stroke-width="1.1" stroke-linecap="round" stroke-linejoin="round"><path d="M2.2 8.5l3.6 4.4 8-9.4"/></svg>
<svg class="a" style="left:303.0px;top:163.0px;" width="16" height="16" viewBox="0 0 16 16" fill="none" stroke="#ffffff" stroke-width="1.1" stroke-linecap="round" stroke-linejoin="round"><path d="M3.2 6l4.8 4.8 4.8-4.8"/></svg>
<svg class="a" style="left:58.8px;top:192.5px;" width="16" height="16" viewBox="0 0 16 16" fill="none" stroke="#424242" stroke-width="1.1" stroke-linecap="round" stroke-linejoin="round"><path d="M3.2 5.8l4.8 4.8 4.8-4.8"/></svg>
<svg class="a" style="left:78.3px;top:217px" width="11" height="11" viewBox="0 0 12 12"><path d="M6 0.3l5.7 5.7-5.7 5.7-5.7-5.7z" fill="#3d4a55"/><path d="M4.6 3.2l2.6 2.6M6 4.6v3.6" stroke="#f8f8f8" stroke-width="1"/><circle cx="6" cy="8.4" r="0.9" fill="#f8f8f8"/></svg>
<svg class="a" style="left:78.3px;top:239.0px" width="11.0" height="11.0" viewBox="0 0 12 12"><circle cx="6" cy="6" r="6" fill="#5f9ab8"/><path d="M6 0v12M0 6h12" stroke="#fff" stroke-width="1.3"/></svg>
<svg class="a" style="left:75.8px;top:258.0px;" width="16" height="16" viewBox="0 0 16 16" fill="none" stroke="#5f9ab8" stroke-width="1.1" stroke-linecap="round" stroke-linejoin="round"><circle cx="8" cy="8" r="5.9"/><path d="M8 7v4.3M6.6 11.3h2.8M6.8 7h1.2"/><circle cx="8" cy="4.9" r="0.5" fill="#5f9ab8"/></svg>
<svg class="a" style="left:246.5px;top:236.5px;" width="16" height="16" viewBox="0 0 16 16" fill="none" stroke="#333" stroke-width="1.1" stroke-linecap="round" stroke-linejoin="round"><path d="M3.5 6.2v8.3h10v-10.3l-2.7-2.7h-3"/><path d="M10.8 1.5v2.7h2.7"/><path d="M1.6 5.2c0-1.8 1-3 3-3h1.3M4.4 0.6l1.6 1.6-1.6 1.6"/></svg>
<svg class="a" style="left:267.4px;top:236.5px;" width="16" height="16" viewBox="0 0 16 16" fill="none" stroke="#222" stroke-width="1.1" stroke-linecap="round" stroke-linejoin="round"><path d="M3.7 1.7V5.4H7.4"/><path d="M4.2 5C5.5 2.5 9 0.6 11.6 2.8C14 4.8 13.6 8.2 11.5 10.3L6.3 14.1"/></svg>
<svg class="a" style="left:286.8px;top:236.5px;" width="16" height="16" viewBox="0 0 16 16" fill="none" stroke="#333" stroke-width="1.1" stroke-linecap="round" stroke-linejoin="round"><path d="M8 2v12M2 8h12"/></svg>
<svg class="a" style="left:50.0px;top:565.5px;" width="16" height="16" viewBox="0 0 16 16" fill="none" stroke="#424242" stroke-width="1.1" stroke-linecap="round" stroke-linejoin="round"><path d="M3.2 5.8l4.8 4.8 4.8-4.8"/></svg>
<svg class="a" style="left:136.4px;top:565.5px;" width="16" height="16" viewBox="0 0 16 16" fill="none" stroke="#424242" stroke-width="1.1" stroke-linecap="round" stroke-linejoin="round"><circle cx="4.5" cy="3" r="1.8"/><circle cx="4.5" cy="13" r="1.8"/><circle cx="12" cy="5.5" r="1.8"/><path d="M4.5 4.8v6.4M12 7.3c0 2.7-2 3.2-4 3.3-2 0.1-3.3 0.6-3.5 0.6"/></svg>
<svg class="a" style="left:185.75px;top:565.5px;" width="16" height="16" viewBox="0 0 16 16" fill="none" stroke="#424242" stroke-width="1.1" stroke-linecap="round" stroke-linejoin="round"><circle cx="8" cy="8" r="6.3"/><circle cx="8" cy="8" r="3.6"/><circle cx="8" cy="8" r="1" fill="#424242"/></svg>
<svg class="a" style="left:210.0px;top:565.5px;" width="16" height="16" viewBox="0 0 16 16" fill="none" stroke="#424242" stroke-width="1.1" stroke-linecap="round" stroke-linejoin="round"><path d="M8 0.5v1.3M8 3.2v1.3M8 5.8v1.1M4.8 4.8l3.2 3.2 3.2-3.2"/><circle cx="8" cy="12.2" r="2.3"/><path d="M1.5 12.2h4.2M10.3 12.2h4.2"/></svg>
<svg class="a" style="left:234.5px;top:565.5px;" width="16" height="16" viewBox="0 0 16 16" fill="none" stroke="#ababab" stroke-width="1.1" stroke-linecap="round" stroke-linejoin="round"><path d="M8 0.5v7.5M4.8 4.8l3.2 3.2 3.2-3.2"/><circle cx="8" cy="12.2" r="2.3"/><path d="M1.5 12.2h4.2M10.3 12.2h4.2"/></svg>
<svg class="a" style="left:257.75px;top:565.5px;" width="16" height="16" viewBox="0 0 16 16" fill="none" stroke="#424242" stroke-width="1.1" stroke-linecap="round" stroke-linejoin="round"><path d="M5 12.5h-1.5a3 3 0 0 1-0.4-6 4.6 4.6 0 0 1 9-0.6 3.2 3.2 0 0 1 0.4 6.6h-1.5"/><path d="M8 15v-6.5M5.8 10.6l2.2-2.2 2.2 2.2"/></svg>
<svg class="a" style="left:281.5px;top:565.5px;" width="16" height="16" viewBox="0 0 16 16" fill="none" stroke="#424242" stroke-width="1.1" stroke-linecap="round" stroke-linejoin="round"><path d="M11.3 2.6a6 6 0 1 1-6.6 0"/><path d="M1.6 1.7h3.6v3.5"/></svg>
<svg class="a" style="left:305.75px;top:565.5px" width="16" height="16" viewBox="0 0 16 16" fill="#424242"><circle cx="3" cy="8" r="1"/><circle cx="8" cy="8" r="1"/><circle cx="13" cy="8" r="1"/></svg>
<svg class="a" style="left:50px;top:586px" width="18" height="18" viewBox="0 0 18 18"><circle cx="9" cy="9" r="8.4" fill="#f4f5f9"/><circle cx="9" cy="9" r="6.2" fill="#fff" stroke="#3f8af7" stroke-width="2.6"/></svg>
<svg class="a" style="left:252.5px;top:587.0px;" width="16" height="16" viewBox="0 0 16 16" fill="none" stroke="#ffffff" stroke-width="1.15" stroke-linecap="round" stroke-linejoin="round"><circle cx="8" cy="8" r="5.8"/><circle cx="8" cy="8" r="3"/></svg>
<svg class="a" style="left:306.8px;top:587.0px;" width="16" height="16" viewBox="0 0 16 16" fill="none" stroke="#333" stroke-width="1.05" stroke-linecap="round" stroke-linejoin="round"><path d="M2 2.2a1 1 0 0 1 1-1h7.3l2.7 2.7v10a1 1 0 0 1-1 1h-9a1 1 0 0 1-1-1z"/><path d="M10.2 1.2l3.3 0 1.5 1.5v11.7"/><path d="M4.5 5.8h4M6.5 3.8v4M4.5 10.5h4"/></svg>
<svg class="a" style="left:73.3px;top:611.5px" width="11.0" height="11.0" viewBox="0 0 12 12"><circle cx="6" cy="6" r="6" fill="#5f9ab8"/><path d="M6 0v12M0 6h12" stroke="#fff" stroke-width="1.3"/></svg>
<svg class="a" style="left:351.4px;top:75.0px" width="11.0" height="11.0" viewBox="0 0 12 12"><circle cx="6" cy="6" r="6" fill="#5f9ab8"/><path d="M6 0v12M0 6h12" stroke="#fff" stroke-width="1.3"/></svg>
<svg class="a" style="left:509.4px;top:75.0px" width="11.0" height="11.0" viewBox="0 0 12 12"><circle cx="6" cy="6" r="6" fill="#5f9ab8"/><path d="M6 0v12M0 6h12" stroke="#fff" stroke-width="1.3"/></svg>
<svg class="a" style="left:725.7px;top:72.5px;" width="16" height="16" viewBox="0 0 16 16" fill="none" stroke="#424242" stroke-width="1.1" stroke-linecap="round" stroke-linejoin="round"><path d="M3.8 3.8l8.4 8.4M12.2 3.8l-8.4 8.4"/></svg>
<svg class="a" style="left:350.0px;top:103.5px;" width="16" height="16" viewBox="0 0 16 16" fill="none" stroke="#333" stroke-width="1.05" stroke-linecap="round" stroke-linejoin="round"><rect x="1.2" y="2" width="13.6" height="12" rx="1"/><path d="M1.2 5h13.6M3.5 7.8h4.5M3.5 10.8h4.5"/><rect x="9.6" y="8.6" width="3" height="3"/></svg>
<svg class="a" style="left:1097.2px;top:103.5px;" width="16" height="16" viewBox="0 0 16 16" fill="none" stroke="#333" stroke-width="1.05" stroke-linecap="round" stroke-linejoin="round"><path d="M0.8 6.3l1.8 1.7-1.8 1.7"/><rect x="5" y="1.5" width="10" height="5.5" rx="1.2"/><rect x="5" y="9" width="10" height="5.5" rx="1.2"/></svg>
<svg class="a" style="left:1217.8px;top:103.5px;" width="16" height="16" viewBox="0 0 16 16" fill="none" stroke="#333" stroke-width="1.4" stroke-linecap="round" stroke-linejoin="round"><path d="M5.3 13.2a6.3 6.3 0 1 1 5.4 0"/><path d="M8 15.8v-9.5M5 9.2l3-3 3 3"/></svg>
<svg class="a" style="left:1243.3px;top:103.5px;" width="16" height="16" viewBox="0 0 16 16" fill="none" stroke="#333" stroke-width="1.1" stroke-linecap="round" stroke-linejoin="round"><path d="M3.5 6.2v8.3h10v-10.3l-2.7-2.7h-3"/><path d="M10.8 1.5v2.7h2.7"/><path d="M1.6 5.2c0-1.8 1-3 3-3h1.3M4.4 0.6l1.6 1.6-1.6 1.6"/></svg>
<svg class="a" style="left:1270.4px;top:103.5px;" width="16" height="16" viewBox="0 0 16 16" fill="none" stroke="#333" stroke-width="1.1" stroke-linecap="round" stroke-linejoin="round"><path d="M8 14v-12M3.3 6.6l4.7-4.7 4.7 4.7"/></svg>
<svg class="a" style="left:1296.4px;top:103.5px;" width="16" height="16" viewBox="0 0 16 16" fill="none" stroke="#333" stroke-width="1.1" stroke-linecap="round" stroke-linejoin="round"><path d="M8 2v12M3.3 9.4l4.7 4.7 4.7-4.7"/></svg>
<svg class="a" style="left:1321.8px;top:103.5px;" width="16" height="16" viewBox="0 0 16 16" fill="none" stroke="#333" stroke-width="1.1" stroke-linecap="round" stroke-linejoin="round"><path d="M9 1.5v13M12 1.5v13M13.5 1.5h-7a3.2 3.2 0 0 0 0 6.4h2.5M7.8 14.5h5.6"/></svg>
<svg class="a" style="left:1348.0px;top:103.5px;" width="16" height="16" viewBox="0 0 16 16" fill="none" stroke="#333" stroke-width="1.05" stroke-linecap="round" stroke-linejoin="round"><path d="M1.5 3.2l4.3-1.7 4.4 1.7 4.3-1.7v11.3l-4.3 1.7-4.4-1.7-4.3 1.7z M5.8 1.5v11.3M10.2 3.2v11.3"/></svg>
<svg class="a" style="left:1374.4px;top:103.5px;" width="16" height="16" viewBox="0 0 16 16" fill="none" stroke="#333" stroke-width="1.1" stroke-linecap="round" stroke-linejoin="round"><rect x="1.5" y="1.5" width="13" height="13" rx="1.2"/><path d="M8 1.5v13"/></svg>
<svg class="a" style="left:1399.8px;top:103.5px;" width="16" height="16" viewBox="0 0 16 16" fill="none" stroke="#333" stroke-width="1.1" stroke-linecap="round" stroke-linejoin="round"><path d="M7 3h-5.3v10.5h11v-4.8"/><path d="M9 1.8h5.2v5.2M14.2 1.8l-6.8 6.8"/></svg>
<svg class="a" style="left:1426px;top:103.5px" width="16" height="16" viewBox="0 0 16 16" fill="#333"><circle cx="3" cy="8" r="1"/><circle cx="8" cy="8" r="1"/><circle cx="13" cy="8" r="1"/></svg>
<svg class="a" style="left:357.4px;top:132.0px" width="11.0" height="11.0" viewBox="0 0 12 12"><circle cx="6" cy="6" r="6" fill="#5f9ab8"/><path d="M6 0v12M0 6h12" stroke="#fff" stroke-width="1.3"/></svg>
<svg class="a" style="left:457.5px;top:129.5px;" width="16" height="16" viewBox="0 0 16 16" fill="none" stroke="#555" stroke-width="1.0" stroke-linecap="round" stroke-linejoin="round"><path d="M5.8 3.2l4.8 4.8-4.8 4.8"/></svg>
<div class="t " style="left:473.6px;top:137.5px;font-size:13px;color:#555">...</div>
<svg class="a" style="left:855.0px;top:220.5px;" width="16" height="16" viewBox="0 0 16 16" fill="none" stroke="#333" stroke-width="1.05" stroke-linecap="round" stroke-linejoin="round"><path d="M2 8h12M9.2 3.2l4.8 4.8-4.8 4.8"/></svg>
<svg class="a" style="left:855.0px;top:238.0px;" width="16" height="16" viewBox="0 0 16 16" fill="none" stroke="#333" stroke-width="1.05" stroke-linecap="round" stroke-linejoin="round"><path d="M8 1.5v13M1.5 8h13"/></svg>
<svg class="a" style="left:1540.5px;top:71.5px" width="16" height="16" viewBox="0 0 16 16" fill="#424242"><circle cx="3" cy="8" r="1"/><circle cx="8" cy="8" r="1"/><circle cx="13" cy="8" r="1"/></svg>
<svg class="a" style="left:1623.75px;top:72.25px;" width="14.5" height="14.5" viewBox="0 0 16 16" fill="none" stroke="#333" stroke-width="1.1" stroke-linecap="round" stroke-linejoin="round"><path d="M1.8 5.5v-3.7h3.7M10.5 1.8h3.7v3.7M14.2 10.5v3.7h-3.7M5.5 14.2h-3.7v-3.7"/></svg>
<svg class="a" style="left:1649.0px;top:71.5px;" width="16" height="16" viewBox="0 0 16 16" fill="none" stroke="#333" stroke-width="1.1" stroke-linecap="round" stroke-linejoin="round"><path d="M3.6 3.6l8.8 8.8M12.4 3.6l-8.8 8.8"/></svg>
<svg class="a" style="left:1457.9px;top:100.2px;" width="16" height="16" viewBox="0 0 16 16" fill="none" stroke="#424242" stroke-width="1.1" stroke-linecap="round" stroke-linejoin="round"><path d="M3.2 5.8l4.8 4.8 4.8-4.8"/></svg>
<svg class="a" style="left:1469.0px;top:125.0px;" width="16" height="16" viewBox="0 0 16 16" fill="none" stroke="#333" stroke-width="1.1" stroke-linecap="round" stroke-linejoin="round"><path d="M0.7 1.2h14.4"/><rect x="1" y="4.2" width="3" height="3"/><rect x="6.5" y="4.2" width="3" height="3"/><rect x="12" y="4.2" width="3" height="3"/><path d="M0.7 9h14.4"/><rect x="1" y="11.2" width="3" height="3"/><rect x="6.5" y="11.2" width="3" height="3"/><rect x="12" y="11.2" width="3" height="3"/></svg>
<svg class="a" style="left:1489.3px;top:131.3px" width="6" height="4" viewBox="0 0 6 4"><path d="M0 0h6l-3 4z" fill="#333"/></svg>
<svg class="a" style="left:1507.25px;top:126.25px;" width="13.5" height="13.5" viewBox="0 0 16 16" fill="none" stroke="#333" stroke-width="1.1" stroke-linecap="round" stroke-linejoin="round"><path d="M4.5 15v-13.5M1.2 5l3.3-3.3 3.3 3.3M11.5 1v13.5M8.2 11l3.3 3.3 3.3-3.3"/></svg>
<svg class="a" style="left:1526.5px;top:131.3px" width="6" height="4" viewBox="0 0 6 4"><path d="M0 0h6l-3 4z" fill="#333"/></svg>
<svg class="a" style="left:1617.6px;top:125.0px;" width="16" height="16" viewBox="0 0 16 16" fill="none" stroke="#333" stroke-width="1.15" stroke-linecap="round" stroke-linejoin="round"><path d="M12.8 5.2a6 6 0 1 0 0.8 5.3"/><path d="M13.3 1.3v4.2h-4.2"/><path d="M10.6 8a2.6 2.6 0 1 1-2.6-2.6"/></svg>
<div class="a " style="left:1642.4px;top:127px;width:1px;height:13px;background:#d8d8d8"></div>
<svg class="a" style="left:1650.8px;top:125.0px;" width="16" height="16" viewBox="0 0 16 16" fill="none" stroke="#333" stroke-width="1.05" stroke-linecap="round" stroke-linejoin="round"><path d="M1 2h14M1 6h14M1 10h9M1 14h9M11.5 10.3l3.3 3.3M14.8 10.3l-3.3 3.3"/></svg>
<svg class="a" style="left:1512.5px;top:158.7px" width="6" height="4" viewBox="0 0 6 4"><path d="M0 0h6l-3 4z" fill="#333"/></svg>
<svg class="a" style="left:1457.9px;top:565.5px;" width="16" height="16" viewBox="0 0 16 16" fill="none" stroke="#424242" stroke-width="1.1" stroke-linecap="round" stroke-linejoin="round"><path d="M3.2 5.8l4.8 4.8 4.8-4.8"/></svg>
<svg class="a" style="left:1475.0px;top:590.0px;" width="16" height="16" viewBox="0 0 16 16" fill="none" stroke="#a8a8a8" stroke-width="1.05" stroke-linecap="round" stroke-linejoin="round"><path d="M7.2 2.2l-5.7 5.8 5.7 5.8v-3h5a2.3 2.3 0 0 0 0-4.6h-5z"/></svg>
<svg class="a" style="left:1501.0px;top:590.0px;" width="16" height="16" viewBox="0 0 16 16" fill="none" stroke="#a8a8a8" stroke-width="1.05" stroke-linecap="round" stroke-linejoin="round"><path d="M8.8 2.2l5.7 5.8-5.7 5.8v-3h-5a2.3 2.3 0 0 1 0-4.6h5z"/></svg>
<svg class="a" style="left:1607.0px;top:590.0px;" width="16" height="16" viewBox="0 0 16 16" fill="none" stroke="#333" stroke-width="1.1" stroke-linecap="round" stroke-linejoin="round"><rect x="1.5" y="1.5" width="4.8" height="13" rx="1"/><rect x="9.5" y="1.5" width="4.8" height="4.8" rx="1"/><rect x="9.5" y="9.7" width="4.8" height="4.8" rx="1"/></svg>
<svg class="a" style="left:1626.6px;top:596.3px" width="6" height="4" viewBox="0 0 6 4"><path d="M0 0h6l-3 4z" fill="#333"/></svg>
<div class="a " style="left:1642.5px;top:590px;width:1px;height:16px;background:#d8d8d8"></div>
<svg class="a" style="left:1651.0px;top:590.0px;" width="16" height="16" viewBox="0 0 16 16" fill="none" stroke="#aaa" stroke-width="1.05" stroke-linecap="round" stroke-linejoin="round"><path d="M1 2h14M1 6h14M1 10h9M1 14h9M11.5 10.3l3.3 3.3M14.8 10.3l-3.3 3.3"/></svg>
<svg class="a" style="left:1167.6px;top:723.5px;" width="16" height="16" viewBox="0 0 16 16" fill="none" stroke="#333" stroke-width="1.05" stroke-linecap="round" stroke-linejoin="round"><rect x="1.2" y="1.2" width="13.6" height="13.6" rx="1.2"/><path d="M4 5l3 3-3 3M8 11.2h4"/></svg>
<svg class="a" style="left:1215.75px;top:723.5px;" width="16" height="16" viewBox="0 0 16 16" fill="none" stroke="#333" stroke-width="1.1" stroke-linecap="round" stroke-linejoin="round"><path d="M8 1.5v13M1.5 8h13"/></svg>
<svg class="a" style="left:1234.75px;top:726.25px;" width="10.5" height="10.5" viewBox="0 0 16 16" fill="none" stroke="#333" stroke-width="1.3" stroke-linecap="round" stroke-linejoin="round"><path d="M3 6l5 5 5-5"/></svg>
<svg class="a" style="left:1255.0px;top:723.5px;" width="16" height="16" viewBox="0 0 16 16" fill="none" stroke="#333" stroke-width="1.1" stroke-linecap="round" stroke-linejoin="round"><rect x="1.5" y="1.5" width="13" height="13" rx="1.2"/><path d="M8 1.5v13"/></svg>
<svg class="a" style="left:1280.75px;top:723.5px;" width="16" height="16" viewBox="0 0 16 16" fill="none" stroke="#333" stroke-width="1.1" stroke-linecap="round" stroke-linejoin="round"><path d="M2 3.8h12M5.5 3.8v-2.2h5v2.2M3.3 3.8l0.8 10.7h7.8l0.8-10.7M6.6 6.5v5.5M9.4 6.5v5.5"/></svg>
<svg class="a" style="left:1307px;top:723.5px" width="16" height="16" viewBox="0 0 16 16" fill="#333"><circle cx="3" cy="8" r="1"/><circle cx="8" cy="8" r="1"/><circle cx="13" cy="8" r="1"/></svg>
<div class="a " style="left:1334.5px;top:724px;width:1px;height:15px;background:#d0d0d0"></div>
<svg class="a" style="left:1346.0px;top:723.5px;" width="16" height="16" viewBox="0 0 16 16" fill="none" stroke="#333" stroke-width="1.1" stroke-linecap="round" stroke-linejoin="round"><path d="M2.2 8h11.6"/></svg>
<svg class="a" style="left:1372.0px;top:723.5px;" width="16" height="16" viewBox="0 0 16 16" fill="none" stroke="#333" stroke-width="1.1" stroke-linecap="round" stroke-linejoin="round"><path d="M3.6 3.6l8.8 8.8M12.4 3.6l-8.8 8.8"/></svg>
<svg class="a" style="left:1398.0px;top:723.5px;" width="16" height="16" viewBox="0 0 16 16" fill="none" stroke="#333" stroke-width="1.1" stroke-linecap="round" stroke-linejoin="round"><rect x="2" y="5" width="9" height="9" rx="0.8"/><path d="M5 5v-2.5h9v9h-3"/></svg>
<svg class="a" style="left:1424.0px;top:723.5px;" width="16" height="16" viewBox="0 0 16 16" fill="none" stroke="#333" stroke-width="1.1" stroke-linecap="round" stroke-linejoin="round"><rect x="3" y="3" width="10" height="10"/></svg>
<svg class="a" style="left:340.0px;top:747.0px;" width="16" height="16" viewBox="0 0 16 16" fill="none" stroke="#b5b5b5" stroke-width="1.6" stroke-linecap="round" stroke-linejoin="round"><circle cx="8" cy="8" r="3.7"/></svg>
<svg class="a" style="left:11.0px;top:1033.0px;" width="12" height="12" viewBox="0 0 16 16" fill="none" stroke="#ffffff" stroke-width="1.4" stroke-linecap="round" stroke-linejoin="round"><path d="M2.3 13.7l5-5-5-5"/><path d="M13.7 2.3l-5 5 5 5" transform="translate(0,-2.2)"/></svg>
<svg class="a" style="left:40.5px;top:1031.0px;" width="16" height="16" viewBox="0 0 16 16" fill="none" stroke="#333" stroke-width="1.1" stroke-linecap="round" stroke-linejoin="round"><circle cx="4.4" cy="2.8" r="1.9"/><circle cx="4.4" cy="13.2" r="1.9"/><circle cx="11.8" cy="5" r="1.9"/><path d="M4.4 4.7v6.6M11.8 6.9c0 2.7-2 3.3-4 3.4-2 0.1-3.2 0.6-3.4 0.8"/></svg>
<svg class="a" style="left:98.5px;top:1032.5px;" width="13" height="13" viewBox="0 0 16 16" fill="none" stroke="#333" stroke-width="1.1" stroke-linecap="round" stroke-linejoin="round"><path d="M5 12.5h-1.5a3 3 0 0 1-0.4-6 4.6 4.6 0 0 1 9-0.6 3.2 3.2 0 0 1 0.4 6.6h-1.5"/><path d="M8 15v-6.5M5.8 10.6l2.2-2.2 2.2 2.2"/></svg>
<svg class="a" style="left:127.0px;top:1031.0px;" width="16" height="16" viewBox="0 0 16 16" fill="none" stroke="#333" stroke-width="1.05" stroke-linecap="round" stroke-linejoin="round"><circle cx="8" cy="8" r="5.9"/><path d="M5.6 5.6l4.8 4.8M10.4 5.6l-4.8 4.8"/></svg>
<svg class="a" style="left:155.3px;top:1031.0px;" width="16" height="16" viewBox="0 0 16 16" fill="none" stroke="#333" stroke-width="1.05" stroke-linecap="round" stroke-linejoin="round"><path d="M8 2l6.3 11.5h-12.6z"/><path d="M8 6.3v3.6"/><circle cx="8" cy="11.6" r="0.5" fill="#333"/></svg>
<svg class="a" style="left:1192.5px;top:1031.0px;" width="16" height="16" viewBox="0 0 16 16" fill="none" stroke="#333" stroke-width="1.2" stroke-linecap="round" stroke-linejoin="round"><circle cx="8" cy="8" r="3"/><path d="M8 0.8v4.2M8 11v4.2"/></svg>
<svg class="a" style="left:1620.0px;top:1031.0px;" width="16" height="16" viewBox="0 0 16 16" fill="none" stroke="#333" stroke-width="1.0" stroke-linecap="round" stroke-linejoin="round"><path d="M3 11.5c-1.2-0.5-1.8-1.6-1.8-2.8 0-1.2 0.6-2 1.3-2.4v-1.8c0-1.8 1.2-3 3.2-3 1 0 1.8 0.4 2.3 1 0.5-0.6 1.3-1 2.3-1 2 0 3.2 1.2 3.2 3"/><circle cx="5.8" cy="6" r="1.5"/><circle cx="10.2" cy="6" r="1.5"/><circle cx="11.5" cy="11.5" r="3.6"/><path d="M10 10l3 3M13 10l-3 3"/></svg>
<svg class="a" style="left:1649.8px;top:1031.0px;" width="16" height="16" viewBox="0 0 16 16" fill="none" stroke="#333" stroke-width="1.05" stroke-linecap="round" stroke-linejoin="round"><path d="M3 12h10l-1.5-2v-3.5a3.5 3.5 0 0 0-7 0v3.5z"/><path d="M6.5 13.5a1.5 1.5 0 0 0 3 0"/></svg>
<svg class="a" style="left:0;top:0" width="1680" height="1050" viewBox="0 0 1680 1050">
<path d="M660.7 155.2 Q685.2 120.5 692.2 102.6" stroke="#d43a1f" stroke-width="2" fill="none"/>
<path d="M695.7 91.2 L686.5 100.8 L698 104.7z" fill="#d43a1f"/>
<path d="M1170.2 185.1 L1125.5 229.3" stroke="#d43a1f" stroke-width="1.9" fill="none"/>
<path d="M1116.5 237.8 L1121.3 225 L1129.7 233.7z" fill="#d43a1f"/>
<path d="M1311.5 185.75 L1401 185.75" stroke="#d43a1f" stroke-width="2" fill="none"/>
<path d="M1412.4 185.75 L1400 179.75 L1400 191.75z" fill="#d43a1f"/>
<path d="M1328 464 L1417 464" stroke="#d43a1f" stroke-width="2" fill="none"/>
<path d="M1428.9 464 L1416.5 457.8 L1416.5 470.2z" fill="#d43a1f"/>
</svg></body></html>
